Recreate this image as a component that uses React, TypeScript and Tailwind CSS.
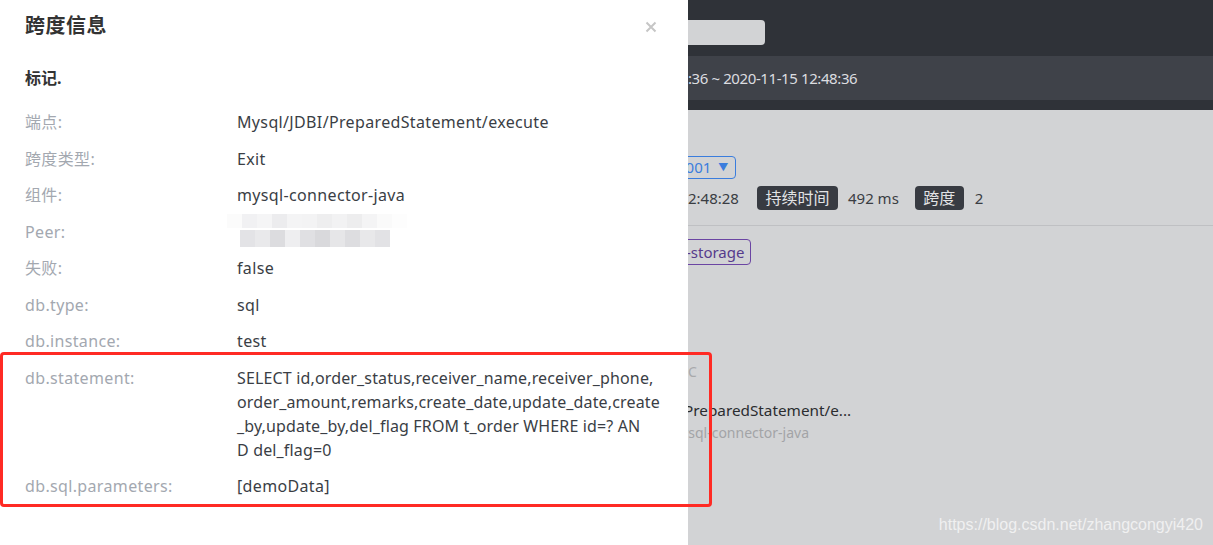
import { FC, ReactNode } from "react";

const FONT = { fontFamily: '"Noto Sans", "Noto Sans CJK SC", sans-serif' };

// statement wraps as in the source page (break-all in a fixed column)
const STATEMENT_LINES = [
  "SELECT id,order_status,receiver_name,receiver_phone,",
  "order_amount,remarks,create_date,update_date,create",
  "_by,update_by,del_flag FROM t_order WHERE id=? AN",
  "D del_flag=0",
];

const ROWS: { label: string; value: ReactNode }[] = [
  { label: "端点:", value: "Mysql/JDBI/PreparedStatement/execute" },
  { label: "跨度类型:", value: "Exit" },
  { label: "组件:", value: "mysql-connector-java" },
  { label: "Peer:", value: "__mosaic__" },
  { label: "失败:", value: "false" },
  { label: "db.type:", value: "sql" },
  { label: "db.instance:", value: "test" },
  {
    label: "db.statement:",
    value: STATEMENT_LINES.map((line) => (
      <span key={line} className="block whitespace-nowrap tracking-[0.15px]">
        {line}
      </span>
    )),
  },
  { label: "db.sql.parameters:", value: "[demoData]" },
];

// blurred peer address, drawn as pixel blocks
const MOSAIC_TOP = ["#fbfbfb", "#f1f1f3", "#f5f5f6", "#ececee", "#f4f4f5", "#f3f3f4", "#eeeeef", "#f2f2f3", "#ededee", "#f4f4f5", "#fafafa", "#fdfdfd"];
const MOSAIC_BOTTOM = ["#e3e3e6", "#e9e9eb", "#dcdcdf", "#eeeef0", "#e0e0e3", "#d9d9dc", "#e6e6e8", "#dddde0", "#e8e8ea", "#e2e2e5"];

const Mosaic: FC = () => (
  <div className="h-6">
    <div className="flex flex-col -mt-[6px]">
      <div className="flex -ml-[10px] h-[14px]">
        {MOSAIC_TOP.map((c, i) => (
          <div key={i} className="w-[15px] h-full" style={{ background: c }} />
        ))}
      </div>
      <div className="flex ml-[3px] mt-[2px] h-[17px]">
        {MOSAIC_BOTTOM.map((c, i) => (
          <div key={i} className="w-[15px] h-full" style={{ background: c }} />
        ))}
      </div>
    </div>
  </div>
);

const Drawer: FC = () => (
  <div className="w-[688px] shrink-0 h-full bg-white px-[25px] pt-3" style={FONT}>
    <div className="flex items-center justify-between h-7">
      <h2 className="text-[20px] leading-7 font-bold text-[#333] tracking-[0.5px]">跨度信息</h2>
      <svg width="12" height="12" viewBox="0 0 12 12" className="mr-[6px] mt-[1px]">
        <path d="M1.5 1.5L10.5 10.5M10.5 1.5L1.5 10.5" stroke="#c6c6c6" strokeWidth="2" />
      </svg>
    </div>
    <h3 className="mt-[26px] text-[16px] leading-6 font-bold text-[#333]">标记.</h3>
    <div className="mt-[13.75px]">
      {ROWS.map((row) => (
        <div key={row.label} className="flex py-[6.25px] text-[16px] leading-6 tracking-[0.35px]">
          <div className="w-[212px] shrink-0 text-[#a3a8b0]">{row.label}</div>
          <div className="w-[428px] text-[#3a3e45] break-all">
            {row.value === "__mosaic__" ? <Mosaic /> : row.value}
          </div>
        </div>
      ))}
    </div>
  </div>
);

const Background: FC = () => (
  <div className="flex-1 h-full bg-[#d2d3d5] overflow-hidden flex flex-col" style={FONT}>
    <div className="h-[56px] bg-[#2f3238] pt-[20px]">
      <div className="w-[120px] h-[25px] -ml-[43px] rounded-[4px] bg-[#d2d3d5]" />
    </div>
    <div className="h-[44px] bg-[#3f4249] flex items-center text-[15px] text-[#dcdde0] whitespace-nowrap -tracking-[0.4px]">
      :36 ~ 2020-11-15 12:48:36
    </div>
    <div className="h-[10px] bg-[#2f3238]" />

    <div className="mt-[46px] flex">
      <div className="-ml-[14px] h-[23px] flex items-center gap-[7px] pl-[2px] pr-[7px] border border-[#3b7ddd] rounded-[4px] text-[15px] text-[#3b7ddd]">
        <span>0001</span>
        <span className="text-[10px]">▼</span>
      </div>
    </div>

    <div className="mt-[7px] flex items-center h-[24px] text-[15px] text-[#3a3d43] whitespace-nowrap">
      <span>2:48:28</span>
      <span className="ml-[18px] h-[24px] px-[8.5px] flex items-center rounded-[4px] bg-[#383b42] text-[#e2e3e5] text-[16px]">持续时间</span>
      <span className="ml-[10px]">492 ms</span>
      <span className="ml-[16px] h-[24px] px-[8.5px] flex items-center rounded-[4px] bg-[#383b42] text-[#e2e3e5] text-[16px]">跨度</span>
      <span className="ml-[11px]">2</span>
    </div>

    <div className="mt-[15px] h-px bg-[#bfc0c3]" />

    <div className="mt-[13px] flex">
      <div className="-ml-[47px] h-[26px] flex items-center pl-[2px] pr-[6px] border border-[#6b45a3] rounded-[4px] text-[15px] text-[#563b8c] whitespace-nowrap">
        mysql-storage
      </div>
    </div>

    <div className="mt-[97px] h-5 leading-5 text-[14px] text-[#a8a9ab]">C</div>
    <div className="mt-[17px] h-[22px] leading-[22px] text-[15.3px] text-[#2b2c2f] whitespace-nowrap -ml-[4px]">
      PreparedStatement/e...
    </div>
    <div className="mt-[2px] h-5 leading-5 text-[14px] text-[#a3a4a7] whitespace-nowrap -ml-[20px]">
      mysql-connector-java
    </div>
  </div>
);

export default function App() {
  return (
    <div className="relative w-[1213px] h-[545px] flex overflow-hidden">
      <Drawer />
      <Background />
      {/* annotation box */}
      <div className="absolute left-0 top-[352px] w-[712px] h-[155px] border-[3px] border-[#ff2a24] rounded-[4px]" />
      {/* watermark */}
      <div
        className="absolute right-[10px] bottom-[8px] text-[16px] text-[#f4f4f4] opacity-90"
        style={{ fontFamily: '"Liberation Sans", Arial, sans-serif' }}
      >
        https://blog.csdn.net/zhangcongyi420
      </div>
    </div>
  );
}
